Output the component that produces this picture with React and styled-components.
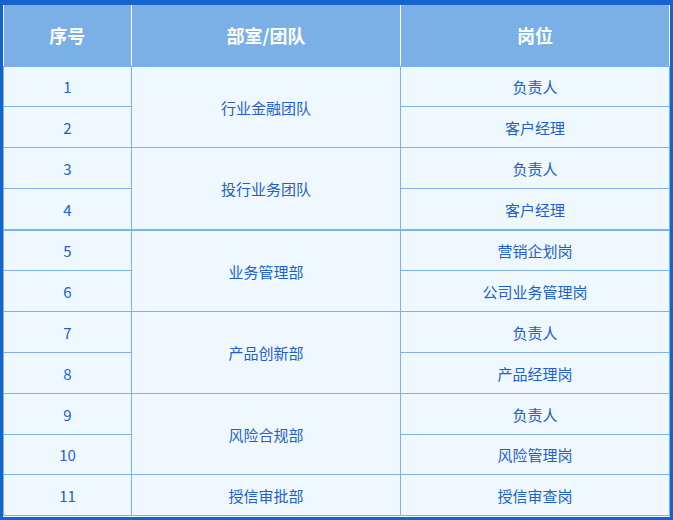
import React from 'react';
import styled, { createGlobalStyle } from 'styled-components';

const GlobalStyle = createGlobalStyle`
    html, body {
        margin: 0;
        padding: 0;
        background: #1565c8;
    }
    body {
        font-family: "Noto Sans CJK SC", "Noto Sans", sans-serif;
    }
`;

const groups = [
    { dept: '行业金融团队', roles: ['负责人', '客户经理'] },
    { dept: '投行业务团队', roles: ['负责人', '客户经理'] },
    { dept: '业务管理部', roles: ['营销企划岗', '公司业务管理岗'] },
    { dept: '产品创新部', roles: ['负责人', '产品经理岗'] },
    { dept: '风险合规部', roles: ['负责人', '风险管理岗'] },
    { dept: '授信审批部', roles: ['授信审查岗'] },
];

const App = () => {
    let n = 0;
    return (
        <>
            <GlobalStyle />
            <Frame>
                <Table>
                    <colgroup>
                        <col style={{ width: 128 }} />
                        <col style={{ width: 269 }} />
                        <col />
                    </colgroup>
                    <thead>
                        <tr>
                            <Th>序号</Th>
                            <Th>部室/团队</Th>
                            <Th>岗位</Th>
                        </tr>
                    </thead>
                    <tbody>
                        {groups.map((g, gi) =>
                            g.roles.map((role, ri) => {
                                n += 1;
                                return (
                                    <Row key={n} $thick={gi === 2 && ri === 0}>
                                        <Td>{n}</Td>
                                        {ri === 0 && <Td rowSpan={g.roles.length}>{g.dept}</Td>}
                                        <Td>{role}</Td>
                                    </Row>
                                );
                            })
                        )}
                    </tbody>
                </Table>
            </Frame>
        </>
    );
};

const Frame = styled.div`
    width: 673px;
    height: 520px;
    box-sizing: border-box;
    border-style: solid;
    border-color: #1565c8;
    border-width: 5px 3px 3px 3px;
    background: #f0f8ff;
    overflow: hidden;
`;

const Table = styled.table`
    width: 667px;
    border-collapse: collapse;
    table-layout: fixed;
`;

const Th = styled.th`
    height: 61px;
    padding: 0;
    background: #7bb0e7;
    color: #ffffff;
    font-size: 18px;
    font-weight: 700;
    text-align: center;
    border-right: 1px solid #ffffff;
    border-bottom: 1px solid #7bb0e7;
    box-sizing: border-box;
`;

const Row = styled.tr`
    td {
        border-top: ${p => (p.$thick ? '2px' : '1px')} solid #7eb1e9;
    }
`;

const Td = styled.td`
    height: 40.9px;
    padding: 2px 0 0;
    border: 1px solid #7eb1e9;
    color: #2160c8;
    font-size: 15px;
    line-height: 20px;
    text-align: center;
    vertical-align: middle;
    box-sizing: border-box;
`;

export default App;
